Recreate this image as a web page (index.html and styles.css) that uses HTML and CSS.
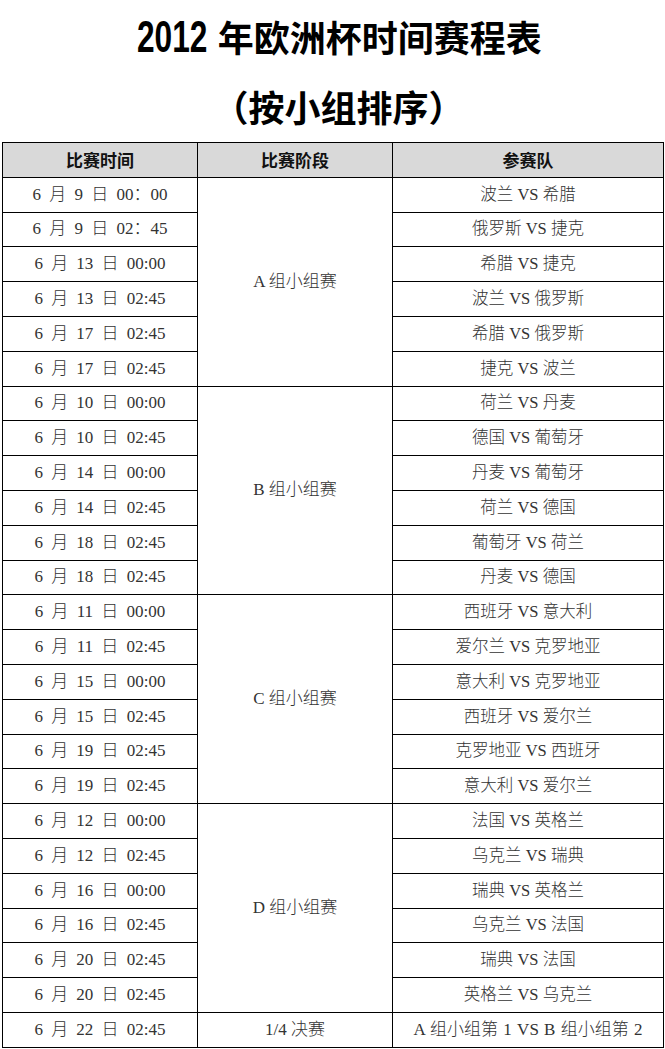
FILE: index.html
```html
<!DOCTYPE html>
<html lang="zh-CN">
<head>
<meta charset="utf-8">
<link rel="stylesheet" href="styles.css">
</head>
<body>
<div class="page">
  <h1 class="title"><span class="num">2012</span> 年欧洲杯时间赛程表</h1>
  <h2 class="subtitle">（按小组排序）</h2>
  <table class="sched">
    <colgroup><col class="c1"><col class="c2"><col class="c3"></colgroup>
    <thead>
      <tr><th>比赛时间</th><th>比赛阶段</th><th>参赛队</th></tr>
    </thead>
    <tbody>
      <tr><td class="time">6 月 9 日 00：00</td><td rowspan="6" class="stage">A 组小组赛</td><td class="team">波兰 VS 希腊</td></tr>
      <tr><td class="time">6 月 9 日 02：45</td><td class="team">俄罗斯 VS 捷克</td></tr>
      <tr><td class="time">6 月 13 日 00:00</td><td class="team">希腊 VS 捷克</td></tr>
      <tr><td class="time">6 月 13 日 02:45</td><td class="team">波兰 VS 俄罗斯</td></tr>
      <tr><td class="time">6 月 17 日 02:45</td><td class="team">希腊 VS 俄罗斯</td></tr>
      <tr><td class="time">6 月 17 日 02:45</td><td class="team">捷克 VS 波兰</td></tr>
      <tr><td class="time">6 月 10 日 00:00</td><td rowspan="6" class="stage">B 组小组赛</td><td class="team">荷兰 VS 丹麦</td></tr>
      <tr><td class="time">6 月 10 日 02:45</td><td class="team">德国 VS 葡萄牙</td></tr>
      <tr><td class="time">6 月 14 日 00:00</td><td class="team">丹麦 VS 葡萄牙</td></tr>
      <tr><td class="time">6 月 14 日 02:45</td><td class="team">荷兰 VS 德国</td></tr>
      <tr><td class="time">6 月 18 日 02:45</td><td class="team">葡萄牙 VS 荷兰</td></tr>
      <tr><td class="time">6 月 18 日 02:45</td><td class="team">丹麦 VS 德国</td></tr>
      <tr><td class="time">6 月 11 日 00:00</td><td rowspan="6" class="stage">C 组小组赛</td><td class="team">西班牙 VS 意大利</td></tr>
      <tr><td class="time">6 月 11 日 02:45</td><td class="team">爱尔兰 VS 克罗地亚</td></tr>
      <tr><td class="time">6 月 15 日 00:00</td><td class="team">意大利 VS 克罗地亚</td></tr>
      <tr><td class="time">6 月 15 日 02:45</td><td class="team">西班牙 VS 爱尔兰</td></tr>
      <tr><td class="time">6 月 19 日 02:45</td><td class="team">克罗地亚 VS 西班牙</td></tr>
      <tr><td class="time">6 月 19 日 02:45</td><td class="team">意大利 VS 爱尔兰</td></tr>
      <tr><td class="time">6 月 12 日 00:00</td><td rowspan="6" class="stage">D 组小组赛</td><td class="team">法国 VS 英格兰</td></tr>
      <tr><td class="time">6 月 12 日 02:45</td><td class="team">乌克兰 VS 瑞典</td></tr>
      <tr><td class="time">6 月 16 日 00:00</td><td class="team">瑞典 VS 英格兰</td></tr>
      <tr><td class="time">6 月 16 日 02:45</td><td class="team">乌克兰 VS 法国</td></tr>
      <tr><td class="time">6 月 20 日 02:45</td><td class="team">瑞典 VS 法国</td></tr>
      <tr><td class="time">6 月 20 日 02:45</td><td class="team">英格兰 VS 乌克兰</td></tr>
      <tr><td class="time">6 月 22 日 02:45</td><td class="stage">1/4 决赛</td><td class="team wide">A 组小组第 1 VS B 组小组第 2</td></tr>
    </tbody>
  </table>
</div>
</body>
</html>
```

FILE: styles.css
```css
html, body {
  margin: 0;
  padding: 0;
  background: #fff;
}
.page {
  width: 665px;
  padding-top: 14px;
  font-family: "Liberation Serif", "Noto Sans CJK SC", serif;
  color: #222;
}
.title {
  margin: 0;
  padding-left: 14px;
  height: 46px;
  line-height: 46px;
  text-align: center;
  font-family: "Liberation Sans", "Noto Sans CJK SC", sans-serif;
  font-weight: bold;
  font-size: 36px;
  letter-spacing: 0;
  color: #000;
  white-space: nowrap;
}
.title .num {
  display: inline-block;
  font-size: 44px;
  transform: scaleX(0.72);
  transform-origin: left center;
  margin-right: -27.4px;
}
.subtitle {
  margin: 23px 0 0 0;
  padding-left: 12px;
  height: 46px;
  line-height: 46px;
  text-align: center;
  font-family: "Noto Sans CJK SC", sans-serif;
  font-feature-settings: "halt";
  font-weight: bold;
  font-size: 36px;
  color: #000;
}
.sched {
  margin: 13px 0 0 2px;
  width: 661px;
  border-collapse: collapse;
  table-layout: fixed;
}
.c1 { width: 195px; }
.c2 { width: 195px; }
.c3 { width: 271px; }
.sched th, .sched td {
  border: 1px solid #000;
  padding: 0;
  text-align: center;
  vertical-align: middle;
  height: 33.8px;
  font-size: 17px;
  line-height: 20px;
  white-space: nowrap;
}
.sched th {
  background: #d9d9d9;
  font-family: "Noto Sans CJK SC", sans-serif;
  font-weight: bold;
  font-size: 17px;
  color: #111;
}
.sched td {
  color: #333;
  font-weight: 300;
}
.sched td.time {
  word-spacing: 4px;
}
.sched td.team {
  font-size: 16.5px;
  word-spacing: 0;
}
.sched td.team.wide {
  font-size: 17px;
  word-spacing: 1px;
}
```
